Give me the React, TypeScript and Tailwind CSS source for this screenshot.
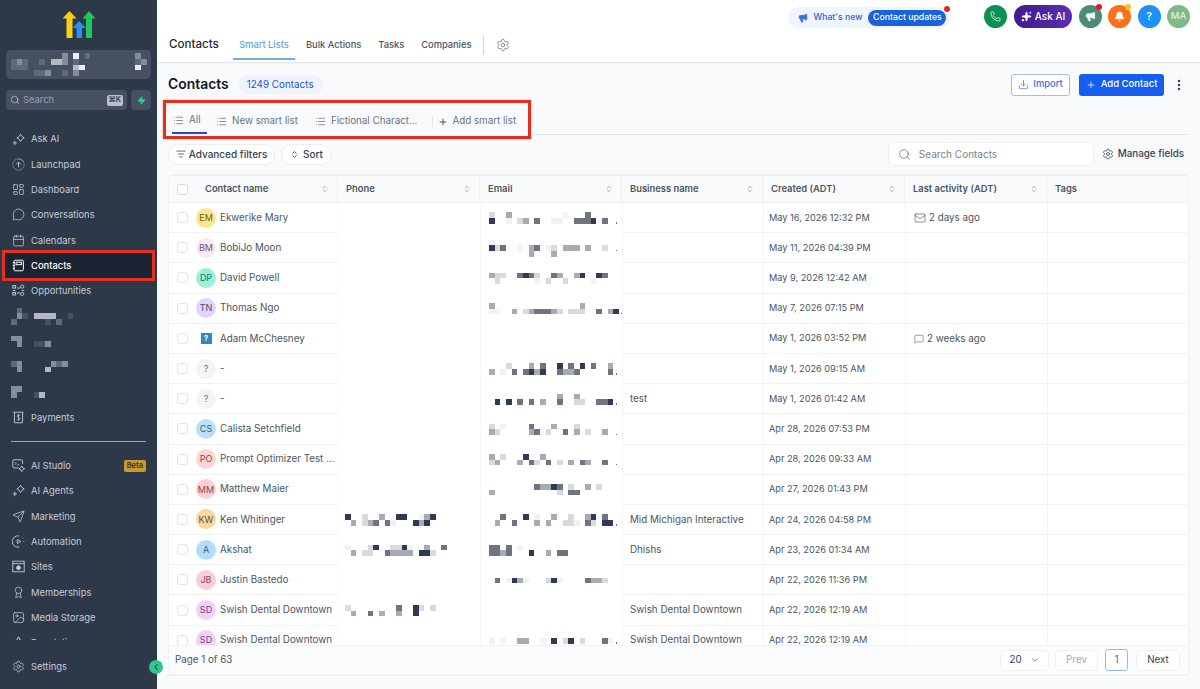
import {
  Award, Bell, Calendar, ChevronDown, ChevronLeft, ChevronsUpDown, Download, EllipsisVertical, Image,
  LayoutDashboard, List, ListFilter, Mail, Megaphone, MessageCircle, MessageSquare, Phone, Plus, Search, Send,
  Settings, Sparkles, Zap,
} from "lucide-react";
import type { ReactNode } from "react";

const lightTones: Record<string, string> = {
  "1": "bg-[#f1f2f4]",
  "2": "bg-[#d8dade]",
  "3": "bg-[#a8abb3]",
  "4": "bg-[#6f7480]",
  "5": "bg-[#2f3b52]",
};

const darkTones: Record<string, string> = {
  "1": "bg-[#46515f]",
  "2": "bg-[#5f6979]",
  "3": "bg-[#858d9a]",
  "4": "bg-[#b4b9c1]",
  "5": "bg-[#eceef0]",
};

function Mosaic({ lines, dark = false }: { lines: string[]; dark?: boolean }) {
  const tones = dark ? darkTones : lightTones;
  return (
    <div className="flex flex-col">
      {lines.map((line, i) => (
        <div key={i} className="flex">
          {line.split("").map((c, j) =>
            c === "o" ? (
              <div key={j} className="w-[5.67px] h-[5.67px] flex items-end justify-center">
                <div className="w-[1.5px] h-[1.5px] bg-[#6f7480]" />
              </div>
            ) : (
              <div key={j} className={`w-[5.67px] h-[5.67px] ${tones[c] ?? ""}`} />
            ),
          )}
        </div>
      ))}
    </div>
  );
}

function Logo() {
  return (
    <svg width="34" height="30" viewBox="0 0 34 30">
      <path d="M7.5 1 L14.5 8.5 H10.5 V28 H4.5 V8.5 H0.5 Z" fill="#fbcf14" />
      <path d="M17 11 L24 18 H20 V28 H14.5 V18 H10.5 Z" fill="#2b8ff0" />
      <path d="M27 1 L33.5 8.5 H30 V28 H24 V8.5 H20.5 Z" fill="#22c55e" />
    </svg>
  );
}

const ico = "w-[13px] h-[13px] shrink-0";

function AskAiIcon() {
  return (
    <svg viewBox="0 0 16 16" className={ico} fill="none" stroke="currentColor" strokeWidth="1.1">
      <path d="M10.5 1.5 L12.2 4.3 L15 6 L12.2 7.7 L10.5 10.5 L8.8 7.7 L6 6 L8.8 4.3 Z" />
      <path d="M3.5 9.5 V15 M1 12.2 H6" />
    </svg>
  );
}

function LaunchIcon() {
  return (
    <svg viewBox="0 0 16 16" className={ico} fill="none" strokeWidth="1.1">
      <circle cx="8" cy="8" r="7" stroke="#7c8797" />
      <path d="M8 1 A7 7 0 0 1 14 5" stroke="#d9824a" />
      <path d="M5 8 L8 5 L11 8 M8 5 V11.5" stroke="currentColor" />
    </svg>
  );
}

function ContactsIcon() {
  return (
    <svg viewBox="0 0 16 16" className={ico} fill="none" stroke="currentColor" strokeWidth="1.2">
      <rect x="2.5" y="1.5" width="11.5" height="13" rx="1.5" />
      <rect x="5" y="4" width="6.5" height="3" />
      <path d="M1 4.5 H3.5 M1 8 H3.5 M1 11.5 H3.5" />
    </svg>
  );
}

function OppIcon() {
  return (
    <svg viewBox="0 0 16 16" className={ico} fill="none" stroke="currentColor" strokeWidth="1.2">
      <rect x="1" y="2" width="3.5" height="3" />
      <rect x="1" y="10.5" width="3.5" height="3" />
      <rect x="10.5" y="1.5" width="4" height="3.5" rx="1.5" />
      <rect x="10.5" y="10.5" width="4" height="3.5" rx="1.5" />
      <path d="M7 4 L9 6 M9 4 L7 6 M7 10 L9 12 M9 10 L7 12 M1 8 H4 M12 8 H15" />
    </svg>
  );
}

function PaymentsIcon() {
  return (
    <svg viewBox="0 0 16 16" className={ico} fill="none" stroke="currentColor" strokeWidth="1.1">
      <path d="M1.5 1.5 H14 M3 1.5 V14.5 H13 V1.5" />
      <path d="M10 5.5 C9 4.5 6.3 4.7 6.3 6.2 C6.3 8 10 7.5 10 9.6 C10 11.2 7 11.3 6 10.2 M8 3.8 V12" strokeWidth="0.9" />
    </svg>
  );
}

function StudioIcon() {
  return (
    <svg viewBox="0 0 16 16" className={ico} fill="none" stroke="currentColor" strokeWidth="1.1">
      <path d="M8 11 H2.5 A1.5 1.5 0 0 1 1 9.5 V2.5 A1.5 1.5 0 0 1 2.5 1 H11.5 A1.5 1.5 0 0 1 13 2.5 V6" />
      <path d="M3.5 4 L5 5.5 L3.5 7 M6.5 7 H8.5" />
      <path d="M12 8.5 L13.2 10.8 L15.5 12 L13.2 13.2 L12 15.5 L10.8 13.2 L8.5 12 L10.8 10.8 Z" />
    </svg>
  );
}

function AutomationIcon() {
  return (
    <svg viewBox="0 0 16 16" className={ico} fill="none" stroke="currentColor" strokeWidth="1.1">
      <path d="M9 1.2 A7 7 0 1 0 9 14.8" />
      <path d="M6.5 5.5 L11 8 L6.5 10.5 Z" />
      <path d="M12.5 3 L13.5 4 M15 8 H14" />
    </svg>
  );
}

function SitesIcon() {
  return (
    <svg viewBox="0 0 16 16" className={ico} fill="none" stroke="currentColor" strokeWidth="1.1">
      <rect x="1" y="1.5" width="14" height="13" />
      <path d="M1 4.5 H15" />
      <circle cx="8" cy="9.5" r="2.4" fill="currentColor" />
    </svg>
  );
}

function ReputationIcon() {
  return (
    <svg viewBox="0 0 16 16" className={ico} fill="none" stroke="currentColor" strokeWidth="1.2">
      <path d="M1 6 L6 5 L8 1 L10 5 L15 6 L11.5 9.5 L12.5 14.5 L8 12 L3.5 14.5 L4.5 9.5 Z" />
    </svg>
  );
}

type NavItem = { label?: string; icon?: ReactNode; active?: boolean; blur?: string[]; badge?: boolean };

const navTop: NavItem[] = [
  { label: "Ask AI", icon: <AskAiIcon /> },
  { label: "Launchpad", icon: <LaunchIcon /> },
  { label: "Dashboard", icon: <LayoutDashboard className={ico} strokeWidth={1.4} /> },
  { label: "Conversations", icon: <MessageCircle className={ico} strokeWidth={1.4} /> },
  { label: "Calendars", icon: <Calendar className={ico} strokeWidth={1.4} /> },
  { label: "Contacts", icon: <ContactsIcon />, active: true },
  { label: "Opportunities", icon: <OppIcon /> },
  { blur: [".2", ".31.4444..1", "2.....1.2"] },
  { blur: ["33", ".3..113"] },
  { blur: ["23.....323", ".3....4"] },
  { blur: ["33", "3...14"] },
  { label: "Payments", icon: <PaymentsIcon /> },
];

const navBottom: NavItem[] = [
  { label: "AI Studio", icon: <StudioIcon />, badge: true },
  { label: "AI Agents", icon: <AskAiIcon /> },
  { label: "Marketing", icon: <Send className={ico} strokeWidth={1.4} /> },
  { label: "Automation", icon: <AutomationIcon /> },
  { label: "Sites", icon: <SitesIcon /> },
  { label: "Memberships", icon: <Award className={ico} strokeWidth={1.4} /> },
  { label: "Media Storage", icon: <Image className={ico} strokeWidth={1.4} /> },
  { label: "Reputation", icon: <ReputationIcon /> },
];

function NavRow({ item }: { item: NavItem }) {
  if (item.blur) {
    return (
      <div className="h-[25.3px] pl-[11px] flex items-center">
        <Mosaic lines={item.blur} dark />
      </div>
    );
  }
  if (item.active) {
    return (
      <div className="relative h-[31.3px] -my-[3px] mx-[2px] pl-[7px] flex items-center gap-[6px] border-[3px] border-[#e3301f] bg-[#1b2232] text-white font-medium">
        {item.icon}
        <span className="pt-[1px]">{item.label}</span>
      </div>
    );
  }
  return (
    <div className="h-[25.3px] pl-[12px] pr-[11px] flex items-center gap-[6px] text-[#c6ccd6]">
      {item.icon}
      <span className="pt-[1px]">{item.label}</span>
      {item.badge && (
        <span className="ml-auto px-[3px] h-[12px] flex items-center rounded-[2px] bg-[#c99a2e] text-[#3a3320] text-[7.5px] font-semibold">Beta</span>
      )}
    </div>
  );
}

function Sidebar() {
  return (
    <aside className="relative w-[157px] h-screen shrink-0 bg-[#2d3849] flex flex-col text-[9.4px]">
      <div className="pt-[10px] flex justify-center">
        <Logo />
      </div>
      <div className="mt-[10px] mx-[6px] h-[29px] rounded-[5px] bg-[#465061] flex items-center pl-[5px] overflow-hidden">
        <Mosaic
          dark
          lines={["11....11.3.5.2........3", "232..2.443.2..........23", "222.1....1145.........5", "1...223..2.3"]}
        />
      </div>
      <div className="mt-[11px] mx-[6px] flex gap-[4px]">
        <div className="w-[122px] h-[20px] rounded-[4px] bg-[#465061] flex items-center pl-[4px] pr-[4px] gap-[3px] text-[#98a1af]">
          <Search className="w-[10px] h-[10px] text-[#c6ccd6]" strokeWidth={1.6} />
          <span>Search</span>
          <span className="ml-auto h-[11px] px-[2px] flex items-center rounded-[2px] bg-[#b9bec6] text-[#2d3849] text-[7.5px] font-semibold">⌘K</span>
        </div>
        <div className="w-[20px] h-[20px] rounded-[4px] bg-[#465061] flex items-center justify-center">
          <Zap className="w-[9px] h-[9px] text-[#34d399] fill-[#34d399]" />
        </div>
      </div>
      <div className="mt-[16.4px] flex-1 min-h-0 overflow-hidden">
        {navTop.map((item, i) => (
          <NavRow key={i} item={item} />
        ))}
        <div className="mt-[11px] mb-[11px] mx-[11px] h-px bg-[#98a4b5]" />
        {navBottom.map((item, i) => (
          <NavRow key={i} item={item} />
        ))}
      </div>
      <div className="mb-[10px] mt-[14px] h-[25px] pl-[12px] flex items-center gap-[6px] text-[#c6ccd6]">
        <Settings className={ico} strokeWidth={1.4} />
        <span className="pt-[1px]">Settings</span>
      </div>
      <div className="absolute left-[149px] top-[660px] w-[14px] h-[14px] rounded-full bg-[#2cc793] flex items-center justify-center">
        <ChevronLeft className="w-[10px] h-[10px] text-[#1e3a35]" strokeWidth={2.5} />
      </div>
    </aside>
  );
}

function CircleBtn({ bg, dot, children }: { bg: string; dot?: string; children: ReactNode }) {
  return (
    <div className={`relative w-[23px] h-[23px] rounded-full flex items-center justify-center text-white ${bg}`}>
      {children}
      {dot && <div className={`absolute -top-[1px] right-0 w-[6px] h-[6px] rounded-full ${dot}`} />}
    </div>
  );
}

function TopBar() {
  return (
    <header className="relative h-[63px] shrink-0 bg-white border-b border-[#e5e7eb] shadow-[0_1px_2px_rgba(0,0,0,0.04)]">
      <div className="absolute left-[12px] top-[36px] text-[11.6px] font-medium text-[#1f2937] leading-[16px]">Contacts</div>
      <div className="h-full pl-[76px] pb-[2px] flex items-end text-[9.3px] font-medium text-[#4b5563]">
        <div className="h-[25px] w-[62px] flex justify-center border-b-2 border-[#6bb0d8] text-[#5fa8d6] pt-[3px] leading-[14px]">Smart Lists</div>
        <div className="h-[25px] ml-[11px] pt-[3px] leading-[14px]">Bulk Actions</div>
        <div className="h-[25px] ml-[17px] pt-[3px] leading-[14px]">Tasks</div>
        <div className="h-[25px] ml-[17px] pt-[3px] leading-[14px]">Companies</div>
        <div className="mb-[5px] ml-[12px] h-[19px] w-px bg-[#d1d5db]" />
        <Settings className="mb-[8px] ml-[12px] w-[14px] h-[14px] text-[#6b7280]" strokeWidth={1.3} />
      </div>
      <div className="absolute right-[10px] top-[5px] flex items-center gap-[6.5px]">
        <div className="relative mt-[2px] mr-[27.5px] w-[162px] h-[21px] pl-[10px] rounded-full bg-[#eff4fe] flex items-center gap-[6px] text-[8.7px] font-medium whitespace-nowrap">
          <Megaphone className="w-[10px] h-[10px] text-[#3b6fd8] fill-[#3b6fd8]" />
          <span className="text-[#2f63d6]">What's new</span>
          <span className="h-[16px] w-[78px] rounded-full bg-[#1b63dd] text-white flex items-center justify-center">Contact updates</span>
          <div className="absolute -top-[1px] right-0 w-[6px] h-[6px] rounded-full bg-[#d92d20]" />
        </div>
        <CircleBtn bg="bg-[#0b8f53]">
          <Phone className="w-[11px] h-[11px]" strokeWidth={1.6} />
        </CircleBtn>
        <div className="ml-[1px] w-[58px] h-[23px] rounded-full bg-[linear-gradient(90deg,#3f1a8c,#5a2fb0)] text-white flex items-center justify-center gap-[3px] text-[10px] font-medium">
          <Sparkles className="w-[11px] h-[11px] fill-white" strokeWidth={1.2} />
          Ask AI
        </div>
        <CircleBtn bg="bg-[#4d8c73]" dot="bg-[#e5172c]">
          <Megaphone className="w-[11px] h-[11px] fill-white" strokeWidth={1.6} />
        </CircleBtn>
        <CircleBtn bg="bg-[#f97316]" dot="bg-[#fbbf24]">
          <Bell className="w-[11px] h-[11px] fill-white" strokeWidth={1.6} />
        </CircleBtn>
        <CircleBtn bg="bg-[#1e90f5]">
          <span className="text-[10.5px] font-semibold">?</span>
        </CircleBtn>
        <CircleBtn bg="bg-[#7fb985]">
          <span className="text-[9.5px] font-medium text-[#e6f2e6]">MA</span>
        </CircleBtn>
      </div>
    </header>
  );
}

function ListTab({ label, active, className }: { label: string; active?: boolean; className: string }) {
  return (
    <div className={`flex items-center gap-[5px] pt-[6px] whitespace-nowrap ${className} ${active ? "border-b-2 border-[#2348c9]" : ""}`}>
      <List className="w-[11px] h-[11px] text-[#5b6472]" strokeWidth={1.5} />
      <span>{label}</span>
    </div>
  );
}

function SmartLists() {
  return (
    <div className="mt-[2px] flex items-start">
      <div className="ml-[6px] w-[368px] h-[39px] border-[3px] border-[#e3301f] shadow-[0_0_2px_rgba(227,48,31,0.4)] text-[9.8px] text-[#6b7280]">
        <div className="h-[31px] flex items-stretch">
          <ListTab label="All" active className="ml-[6px] px-[1px] w-[35px]" />
          <ListTab label="New smart list" className="ml-[9px]" />
          <ListTab label="Fictional Charact..." className="ml-[17px]" />
          <div className="ml-[15px] pt-[6px] flex items-center whitespace-nowrap">
            <div className="h-[14px] w-px bg-[#e5e7eb]" />
            <Plus className="ml-[5px] w-[10px] h-[10px] text-[#1f2937]" strokeWidth={1.8} />
            <span className="ml-[4px]">Add smart list</span>
          </div>
        </div>
      </div>
      <div className="flex-1 h-[35px] mr-[12px] border-b border-[#e5e7eb]" />
    </div>
  );
}

function Filters() {
  const pill = "h-[21px] rounded-full bg-white border border-[#eceef1] flex items-center text-[10px] font-medium text-[#374151]";
  return (
    <div className="mt-[3px] h-[24px] pl-[11px] pr-[16px] flex items-center">
      <div className={`${pill} w-[107px] justify-center gap-[3px]`}>
        <ListFilter className="w-[10px] h-[10px] text-[#4b5563]" />
        Advanced filters
      </div>
      <div className={`${pill} w-[51px] ml-[6px] justify-center gap-[4px]`}>
        <ChevronsUpDown className="w-[9px] h-[9px] text-[#374151]" strokeWidth={2} />
        Sort
      </div>
      <div className="ml-auto w-[206px] h-[24px] rounded-[6px] bg-white border border-[#eef0f3] flex items-center pl-[9px] gap-[8px] text-[10px] text-[#7b8390]">
        <Search className="w-[13px] h-[13px] text-[#6b7280]" strokeWidth={1.4} />
        Search Contacts
      </div>
      <div className="ml-[8px] flex items-center gap-[4px] text-[9.8px] font-medium text-[#374151] whitespace-nowrap">
        <Settings className="w-[12px] h-[12px]" strokeWidth={1.5} />
        Manage fields
      </div>
    </div>
  );
}

type Row = {
  initials: string;
  avatar: string;
  name: string;
  phone?: string[];
  email: string[];
  business?: string;
  created: string;
  activity?: "mail" | "chat";
  activityText?: string;
};

const rows: Row[] = [
  { initials: "EM", avatar: "bg-[#fde68a] text-[#6b5d1e]", name: "Ekwerike Mary", email: ["2..3.........1...4", "5..1.23.4..11..4445.4.o"], created: "May 16, 2026 12:32 PM", activity: "mail", activityText: "2 days ago" },
  { initials: "BM", avatar: "bg-[#fae8f5] text-[#6b5568]", name: "BobiJo Moon", email: ["1", "524..1.34.12.333.3..2.o", ".......3...3"], created: "May 11, 2026 04:39 PM" },
  { initials: "DP", avatar: "bg-[#99f0dd] text-[#2f6f60]", name: "David Powell", email: ["322..45428.43..35..54", ".2......1.2..2....1"], created: "May 9, 2026 12:42 AM" },
  { initials: "TN", avatar: "bg-[#ddd6fe] text-[#4f4a78]", name: "Thomas Ngo", email: ["3...............3", "11..3.2344432.222..4.35o"], created: "May 7, 2026 07:15 PM" },
  { initials: "?", avatar: "", name: "Adam McChesney", email: [], created: "May 1, 2026 03:52 PM", activity: "chat", activityText: "2 weeks ago" },
  { initials: "?", avatar: "bg-[#f3f4f6] text-[#6b7280]", name: "-", email: ["...2...3.4..5.4.5.4..3", "3.1.4.4535..4334.....4o"], created: "May 1, 2026 09:15 AM" },
  { initials: "?", avatar: "bg-[#f3f4f6] text-[#6b7280]", name: "-", email: ["............3..3", ".5.5.4.4.3..4..22..445o"], business: "test", created: "May 1, 2026 01:42 AM" },
  { initials: "CS", avatar: "bg-[#bae0fb] text-[#3f5f78]", name: "Calista Setchfield", email: ["2.1....4...3...2", "32.....34.2..4.3.2..3.o"], created: "Apr 28, 2026 07:53 PM" },
  { initials: "PO", avatar: "bg-[#fbd5d5] text-[#7a4a4a]", name: "Prompt Optimizer Test ...", email: ["3.2...5..3", "23...3.42.4.2.3.43..4.o"], created: "Apr 28, 2026 09:33 AM" },
  { initials: "MM", avatar: "bg-[#fbcfd8] text-[#7a4a55]", name: "Matthew Maier", email: ["........43354.2..3.2", "3...........2.44"], created: "Apr 27, 2026 01:43 PM" },
  { initials: "KW", avatar: "bg-[#f8d7a0] text-[#6b5528]", name: "Ken Whitinger", phone: ["5..2..3..55..135", ".3.234.41...535"], email: ["..4...5.1..3..2..35.4", ".3..4...3.3..221.42.55o"], business: "Mid Michigan Interactive", created: "Apr 24, 2026 04:58 PM" },
  { initials: "A", avatar: "bg-[#b3dcfd] text-[#3a5f80]", name: "Akshat", phone: ["1...25..2251..3..4", ".3.22..43333.552"], email: ["44.4.1", "4434...5..3.44"], business: "Dhishs", created: "Apr 23, 2026 01:34 AM" },
  { initials: "JB", avatar: "bg-[#fecdd8] text-[#7a4a5a]", name: "Justin Bastedo", email: [".4.1531...251....4332"], created: "Apr 22, 2026 11:36 PM" },
  { initials: "SD", avatar: "bg-[#f3d0fb] text-[#6e4a78]", name: "Swish Dental Downtown", phone: ["2........4..52.2", ".3..4.3..3..5"], email: [], business: "Swish Dental Downtown", created: "Apr 22, 2026 12:19 AM" },
  { initials: "SD", avatar: "bg-[#f3d0fb] text-[#6e4a78]", name: "Swish Dental Downtown", email: ["1.1..33..1.5.25.2...41o"], business: "Swish Dental Downtown", created: "Apr 22, 2026 12:19 AM" },
];

const grid = "grid grid-cols-[169px_142px_142px_141px_142px_142px_141px]";

function HeaderCell({ label, sort = true, className = "" }: { label: string; sort?: boolean; className?: string }) {
  return (
    <div className={`h-full px-[8px] flex items-center justify-between border-r border-[#eef0f3] ${className}`}>
      <span>{label}</span>
      {sort && <ChevronsUpDown className="w-[8px] h-[8px] text-[#6b7280]" strokeWidth={1.6} />}
    </div>
  );
}

function TableRow({ row }: { row: Row }) {
  return (
    <div className={`${grid} h-[30.2px] bg-white text-[9.8px] text-[#4b5563]`}>
      <div className="flex items-center border-b border-[#f1f2f4] overflow-hidden">
        <div className="ml-[8px] w-[11px] h-[11px] shrink-0 rounded-[3px] border border-[#e2e4e8] bg-white" />
        {row.name === "Adam McChesney" ? (
          <div className="ml-[8px] w-[20px] h-[20px] shrink-0 flex items-center justify-center">
            <div className="w-[11px] h-[11px] bg-[#2f86c9] text-white text-[8px] leading-[11px] text-center font-bold">?</div>
          </div>
        ) : (
          <div className={`ml-[8px] w-[20px] h-[20px] shrink-0 rounded-full flex items-center justify-center text-[9px] ${row.avatar}`}>{row.initials}</div>
        )}
        <span className="ml-[4px] pt-[1px] whitespace-nowrap">{row.name}</span>
      </div>
      <div className="flex items-center pl-[6px] border-l border-[#f7f8f9]">{row.phone && <Mosaic lines={row.phone} />}</div>
      <div className="flex items-center pl-[8px] overflow-hidden border-l border-[#f5f6f8]">
        <Mosaic lines={row.email} />
      </div>
      <div className="flex items-center pl-[7px] pt-[1px] border-l border-b border-[#f1f2f4] whitespace-nowrap">{row.business}</div>
      <div className="flex items-center pl-[5px] border-l border-b border-[#f1f2f4] text-[9.2px] whitespace-nowrap">{row.created}</div>
      <div className="flex items-center pl-[8px] pt-[1px] gap-[3px] border-l border-b border-[#f1f2f4]">
        {row.activity === "mail" && <Mail className="w-[12px] h-[12px]" strokeWidth={1.3} />}
        {row.activity === "chat" && <MessageSquare className="w-[10px] h-[10px]" strokeWidth={1.4} />}
        {row.activityText}
      </div>
      <div className="border-l border-b border-[#f1f2f4]" />
    </div>
  );
}

function Footer() {
  const btn = "h-[21px] rounded-[5px] border border-[#eef0f3] bg-white flex items-center justify-center";
  return (
    <div className="h-[30px] bg-[#fbfcfd] border-t border-b border-[#f1f2f4] flex items-center pl-[6px] pr-[8px] text-[9.8px] text-[#4b5563]">
      <span>Page 1 of 63</span>
      <div className={`${btn} ml-auto w-[49px] gap-[8px] text-[#374151]`}>
        20
        <ChevronDown className="w-[10px] h-[10px]" strokeWidth={1.6} />
      </div>
      <div className={`${btn} ml-[6px] w-[43px] bg-[#fbfcfd] text-[#a3a8b1]`}>Prev</div>
      <div className="ml-[7px] w-[23px] h-[22px] rounded-[3px] border border-[#8fbce8] bg-white flex items-center justify-center text-[#3b6fa8]">1</div>
      <div className={`${btn} ml-[8px] w-[44px] text-[#374151]`}>Next</div>
    </div>
  );
}

export default function App() {
  return (
    <div className="h-screen flex overflow-hidden bg-[#f8fafc] font-['Inter',sans-serif]">
      <Sidebar />
      <main className="flex-1 min-w-0 flex flex-col">
        <TopBar />
        <div className="pt-[8px] pl-[11px] pr-[14px] h-[35px] shrink-0 flex items-center">
          <h1 className="text-[13.9px] font-semibold text-[#111827]">Contacts</h1>
          <div className="ml-[9px] px-[9px] h-[19px] rounded-full bg-[#eef3fd] text-[#1f56c9] text-[9.9px] flex items-center">1249 Contacts</div>
          <div className="ml-auto w-[59px] h-[22px] rounded-[3px] border border-[#a3bdf0] bg-white text-[#3c6fd9] text-[9.4px] font-medium flex items-center justify-center gap-[4px]">
            <Download className="w-[11px] h-[11px]" strokeWidth={1.5} />
            Import
          </div>
          <div className="ml-[9px] w-[85px] h-[22px] rounded-[3px] bg-[#155eef] text-white text-[9.5px] font-medium flex items-center justify-center gap-[5px]">
            <Plus className="w-[10px] h-[10px]" strokeWidth={1.8} />
            Add Contact
          </div>
          <EllipsisVertical className="ml-[8px] w-[14px] h-[14px] text-[#374151]" strokeWidth={2.2} />
        </div>
        <SmartLists />
        <Filters />
        <div className="mt-[9px] ml-[12px] w-[1019px] rounded-t-[4px] border-t border-[#eef0f3] shadow-[0_0_0_1px_#f1f2f4] overflow-hidden">
          <div className={`${grid} h-[27px] bg-[#f9fafb] border-b border-[#eef0f3] text-[9.4px] font-semibold text-[#4b5563]`}>
            <div className="h-full flex items-center border-r border-[#eef0f3] pr-[8px]">
              <div className="ml-[8px] w-[11px] h-[11px] rounded-[3px] border border-[#d8dbe0] bg-white" />
              <span className="ml-[17px]">Contact name</span>
              <ChevronsUpDown className="ml-auto w-[8px] h-[8px] text-[#6b7280]" strokeWidth={1.6} />
            </div>
            <HeaderCell label="Phone" />
            <HeaderCell label="Email" />
            <HeaderCell label="Business name" />
            <HeaderCell label="Created (ADT)" />
            <HeaderCell label="Last activity (ADT)" />
            <HeaderCell label="Tags" sort={false} className="border-r-0" />
          </div>
          <div className="h-[442px] overflow-hidden">
            {rows.map((row, i) => (
              <TableRow key={i} row={row} />
            ))}
          </div>
          <Footer />
        </div>
      </main>
    </div>
  );
}
